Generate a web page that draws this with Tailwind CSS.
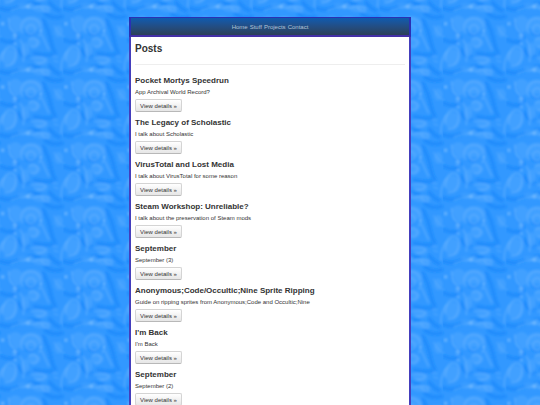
<!DOCTYPE html>
<html lang="en">

<head>
    <meta charset="UTF-8">
    <meta name="viewport" content="width=device-width, initial-scale=1.0">
    <title>Posts</title>
    <script src="https://cdn.jsdelivr.net/npm/@tailwindcss/browser@4"></script>
</head>

<body class="min-h-screen overflow-x-hidden bg-[#3298ff] font-['Liberation_Sans',Arial,sans-serif] text-[6px] leading-[6px] text-[#333333]">

    <!-- Tiled water background -->
    <svg class="fixed inset-0 -z-10 h-full w-full" viewBox="0 0 1280 960" preserveAspectRatio="xMinYMin slice" aria-hidden="true">
        <defs>
            <filter id="soft" x="-20%" y="-20%" width="140%" height="140%">
                <feGaussianBlur stdDeviation="3" />
            </filter>
            <g id="ripples" fill="none" stroke-linecap="round" filter="url(#soft)">
                <!-- dark troughs -->
                <g stroke="#1586fb" stroke-width="11" opacity="0.6">
                    <path d="M0 24 Q30 36 60 20 T118 12" />
                    <path d="M130 60 Q146 90 152 120 T166 158" />
                    <path d="M136 42 Q160 58 186 50" />
                    <path d="M4 120 Q24 130 40 124" />
                    <path d="M26 70 Q34 92 52 112" />
                    <path d="M56 150 Q66 176 84 168" />
                    <path d="M104 160 Q130 168 156 164" />
                    <path d="M150 8 Q160 24 178 32" />
                    <path d="M78 100 Q92 110 106 98" stroke-width="6" />
                </g>
                <!-- broad light patches -->
                <g fill="#4ba5ff" stroke="none" opacity="0.6">
                    <ellipse cx="46" cy="72" rx="22" ry="26" />
                    <ellipse cx="102" cy="128" rx="20" ry="16" />
                    <ellipse cx="28" cy="172" rx="24" ry="26" />
                    <ellipse cx="124" cy="26" rx="26" ry="10" />
                    <ellipse cx="94" cy="70" rx="34" ry="22" />
                    <ellipse cx="176" cy="94" rx="13" ry="18" />
                    <ellipse cx="78" cy="16" rx="24" ry="8" />
                    <ellipse cx="122" cy="184" rx="22" ry="12" />
                    <ellipse cx="76" cy="150" rx="12" ry="22" />
                </g>
                <!-- light crests -->
                <g stroke="#62b1ff" stroke-width="6" opacity="0.55">
                    <circle cx="93" cy="88" r="13" />
                    <path d="M66 98 Q56 66 84 56 Q116 50 124 84 Q126 98 118 108" />
                    <path d="M26 56 Q24 84 44 100 Q54 112 42 116" />
                    <path d="M14 150 Q24 136 40 142 Q54 154 44 180 Q36 200 16 198" />
                    <path d="M6 180 Q8 156 18 148" />
                    <path d="M62 122 Q76 146 70 184" />
                    <path d="M88 118 Q104 108 114 126 Q112 144 96 140" />
                    <path d="M96 176 Q118 166 138 178 Q134 190 112 190" />
                    <path d="M126 104 Q134 124 146 148" />
                    <path d="M72 212 L92 202" />
                    <path d="M34 222 Q66 206 98 214 Q124 206 148 214" />
                    <path d="M160 170 L172 172 M162 182 L174 186" stroke-width="4" />
                    <path d="M184 210 Q182 180 200 156" />
                    <path d="M162 78 Q176 104 192 110" stroke-width="4" />
                    <path d="M124 22 Q134 40 148 32" />
                </g>
                <g fill="#7dbfff" stroke="none" opacity="0.6">
                    <circle cx="44" cy="106" r="6" />
                    <circle cx="84" cy="210" r="6" />
                    <circle cx="8" cy="71" r="6" />
                    <circle cx="122" cy="92" r="4" />
                    <circle cx="46" cy="132" r="4" />
                </g>
            </g>
            <pattern id="water" width="150" height="150" viewBox="0 0 190 190" patternUnits="userSpaceOnUse">
                <rect width="190" height="190" fill="#3298ff" />
                <use href="#ripples" />
                <use href="#ripples" x="-190" />
                <use href="#ripples" y="-190" />
                <use href="#ripples" x="-190" y="-190" />
            </pattern>
        </defs>
        <rect width="1280" height="1280" fill="url(#water)" />
    </svg>

    <!-- Main Container -->
    <div class="mx-auto mt-[17px] w-full max-w-[282px]">

        <!-- Navbar -->
        <nav class="flex h-5 items-center justify-center gap-[2px] border-2 border-t border-[#2a30b4] border-b-[#432fa6] bg-linear-to-b from-[#0c5bb0] to-[#2b3f58] text-[#b4c4d6]">
            <a href="#">Home</a>
            <a href="#">Stuff</a>
            <a href="#">Projects</a>
            <a href="#">Contact</a>
        </nav>

        <!-- Posts -->
        <main class="min-h-screen border-x-2 border-[#443ebc] bg-white px-1 pt-[3px]">
            <h1 class="text-[10px] leading-[17px] font-bold">Posts</h1>
            <hr class="mt-[7px] mb-[7px] border-[#eeeeee]">

            <article class="mb-[2px]">
                <h2 class="text-[8px] leading-[17px] font-bold">Pocket Mortys Speedrun</h2>
                <p class="mb-1">App Archival World Record?</p>
                <button type="button" class="block h-[13px] rounded-[2px] border border-[#d4d4d4] border-b-[#b8b8b8] bg-linear-to-b from-white to-[#e6e6e6] px-1">View details »</button>
            </article>

            <article class="mb-[2px]">
                <h2 class="text-[8px] leading-[17px] font-bold">The Legacy of Scholastic</h2>
                <p class="mb-1">I talk about Scholastic</p>
                <button type="button" class="block h-[13px] rounded-[2px] border border-[#d4d4d4] border-b-[#b8b8b8] bg-linear-to-b from-white to-[#e6e6e6] px-1">View details »</button>
            </article>

            <article class="mb-[2px]">
                <h2 class="text-[8px] leading-[17px] font-bold">VirusTotal and Lost Media</h2>
                <p class="mb-1">I talk about VirusTotal for some reason</p>
                <button type="button" class="block h-[13px] rounded-[2px] border border-[#d4d4d4] border-b-[#b8b8b8] bg-linear-to-b from-white to-[#e6e6e6] px-1">View details »</button>
            </article>

            <article class="mb-[2px]">
                <h2 class="text-[8px] leading-[17px] font-bold">Steam Workshop: Unreliable?</h2>
                <p class="mb-1">I talk about the preservation of Steam mods</p>
                <button type="button" class="block h-[13px] rounded-[2px] border border-[#d4d4d4] border-b-[#b8b8b8] bg-linear-to-b from-white to-[#e6e6e6] px-1">View details »</button>
            </article>

            <article class="mb-[2px]">
                <h2 class="text-[8px] leading-[17px] font-bold">September</h2>
                <p class="mb-1">September (3)</p>
                <button type="button" class="block h-[13px] rounded-[2px] border border-[#d4d4d4] border-b-[#b8b8b8] bg-linear-to-b from-white to-[#e6e6e6] px-1">View details »</button>
            </article>

            <article class="mb-[2px]">
                <h2 class="text-[8px] leading-[17px] font-bold">Anonymous;Code/Occultic;Nine Sprite Ripping</h2>
                <p class="mb-1">Guide on ripping sprites from Anonymous;Code and Occultic;Nine</p>
                <button type="button" class="block h-[13px] rounded-[2px] border border-[#d4d4d4] border-b-[#b8b8b8] bg-linear-to-b from-white to-[#e6e6e6] px-1">View details »</button>
            </article>

            <article class="mb-[2px]">
                <h2 class="text-[8px] leading-[17px] font-bold">I'm Back</h2>
                <p class="mb-1">I'm Back</p>
                <button type="button" class="block h-[13px] rounded-[2px] border border-[#d4d4d4] border-b-[#b8b8b8] bg-linear-to-b from-white to-[#e6e6e6] px-1">View details »</button>
            </article>

            <article class="mb-[2px]">
                <h2 class="text-[8px] leading-[17px] font-bold">September</h2>
                <p class="mb-1">September (2)</p>
                <button type="button" class="block h-[13px] rounded-[2px] border border-[#d4d4d4] border-b-[#b8b8b8] bg-linear-to-b from-white to-[#e6e6e6] px-1">View details »</button>
            </article>
        </main>
    </div>

</body>

</html>
